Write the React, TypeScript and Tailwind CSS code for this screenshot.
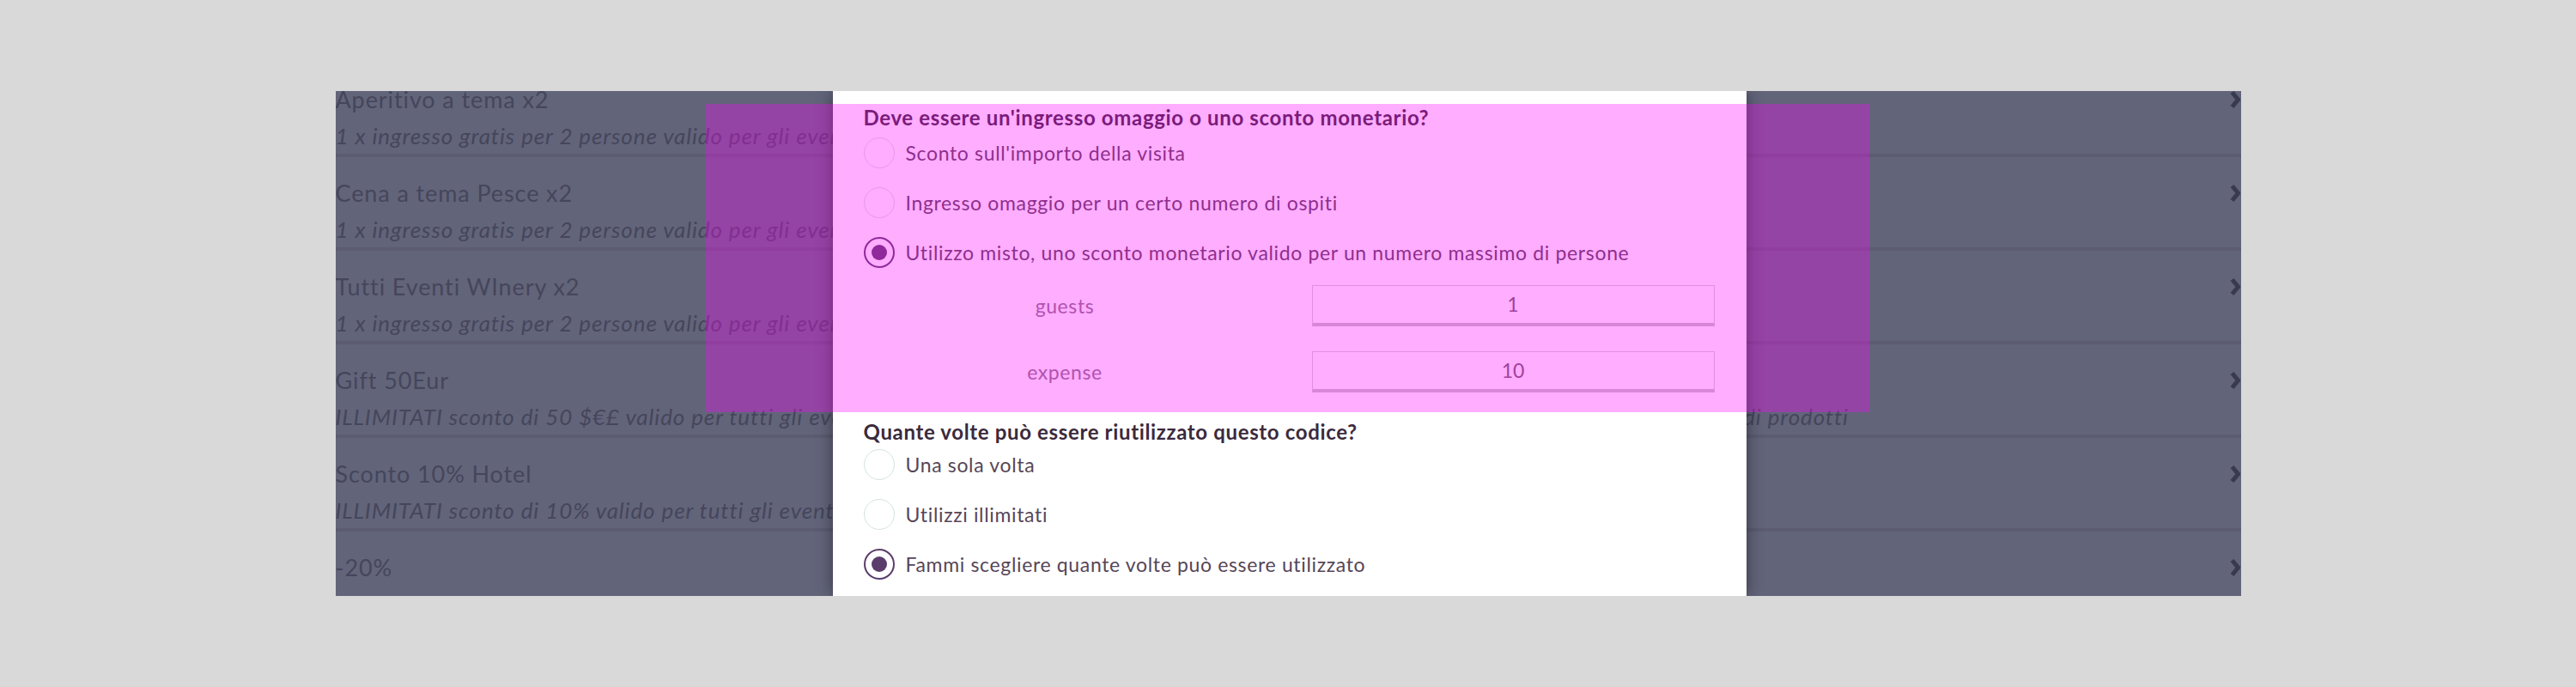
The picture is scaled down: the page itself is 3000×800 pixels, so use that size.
import React from 'react'

const rows = [
  { title: 'Aperitivo a tema x2', desc: '1 x ingresso gratis per 2 persone valido per gli eventi del mese' },
  { title: 'Cena a tema Pesce x2', desc: '1 x ingresso gratis per 2 persone valido per gli eventi del mese' },
  { title: 'Tutti Eventi WInery x2', desc: '1 x ingresso gratis per 2 persone valido per gli eventi del mese' },
  {
    title: 'Gift 50Eur',
    desc: 'ILLIMITATI sconto di 50 $€£ valido per tutti gli eventi, per tutte le esperienze nei vigneti, per le visite, le degustazioni, e per tutte le categorie di prodotti',
  },
  { title: 'Sconto 10% Hotel', desc: 'ILLIMITATI sconto di 10% valido per tutti gli eventi e camere' },
  { title: '-20%', desc: 'ILLIMITATI sconto di 20% valido per tutti gli eventi' },
]

function Chevron() {
  return (
    <svg width="12" height="22" viewBox="0 0 12 22" className="shrink-0">
      <path d="M2.5 2.5 L9.5 11 L2.5 19.5" fill="none" stroke="#393a4f" strokeWidth="5" strokeLinejoin="miter" />
    </svg>
  )
}

function Radio({ label, checked }: { label: string; checked?: boolean }) {
  return (
    <div className="flex items-center h-[36px] gap-[13px]">
      <span
        className={`w-[36px] h-[36px] rounded-full flex items-center justify-center shrink-0 ${
          checked ? 'border-2 border-[#5b3d6c]' : 'border-[1.5px] border-[#d6e2e2]'
        }`}
      >
        {checked && <span className="w-[18px] h-[18px] rounded-full bg-[#5b3d6c]" />}
      </span>
      <span className="text-[23px] tracking-[0.65px] text-[#574657]">{label}</span>
    </div>
  )
}

function NumberField({ label, value }: { label: string; value: string }) {
  return (
    <div className="grid grid-cols-2 gap-x-[53px] items-center">
      <div className="text-center text-[23px] tracking-[0.6px] text-[#8a7a8a]">{label}</div>
      <div className="h-[48px] border border-[#d3d3d3] border-b-[4px] border-b-[#c6c6c6] flex items-center justify-center text-[23px] text-[#6e616e]">
        {value}
      </div>
    </div>
  )
}

export default function App() {
  return (
    <div className="w-[3000px] h-[800px] bg-[#d9d9d9] pt-[106px]" style={{ fontFamily: 'Lato, "Noto Sans", sans-serif' }}>
      <div className="relative mx-auto w-[2219px] h-[588px] overflow-hidden bg-[#62647a]">
        {/* list behind the modal */}
        <div className="mt-[-32px]">
          {rows.map((r) => (
            <div key={r.title} className="h-[109px] border-b-4 border-[#5b5c71] flex items-start justify-between pr-[1px]">
              <div className="pt-[25px] min-w-0">
                <div className="text-[27px] leading-[34px] tracking-[0.9px] text-[#45465b]">{r.title}</div>
                <div className="text-[26px] leading-[32px] tracking-[0.9px] italic text-[#45465b] mt-[9px] whitespace-nowrap">{r.desc}</div>
              </div>
              <div className="mt-[31px]">
                <Chevron />
              </div>
            </div>
          ))}
        </div>

        {/* modal */}
        <div className="absolute inset-y-0 left-[579px] w-[1064px] bg-white shadow-[0_0_18px_rgba(0,0,0,0.45)] pl-[36px] pr-[37px] pt-[17px]">
          <div className="text-[24px] leading-[28px] tracking-[0.65px] font-bold text-[#3b2a3c]">
            Deve essere un'ingresso omaggio o uno sconto monetario?
          </div>
          <div className="mt-[9px] flex flex-col gap-[22px]">
            <Radio label="Sconto sull'importo della visita" />
            <Radio label="Ingresso omaggio per un certo numero di ospiti" />
            <Radio label="Utilizzo misto, uno sconto monetario valido per un numero massimo di persone" checked />
          </div>
          <div className="mt-[20px] flex flex-col gap-[29px]">
            <NumberField label="guests" value="1" />
            <NumberField label="expense" value="10" />
          </div>
          <div className="mt-[32px] text-[24px] leading-[28px] tracking-[0.65px] font-bold text-[#3b2a3c]">
            Quante volte può essere riutilizzato questo codice?
          </div>
          <div className="mt-[6px] flex flex-col gap-[22px]">
            <Radio label="Una sola volta" />
            <Radio label="Utilizzi illimitati" />
            <Radio label="Fammi scegliere quante volte può essere utilizzato" checked />
          </div>
        </div>

        {/* highlight overlay */}
        <div className="absolute left-[431px] top-[15px] w-[1355px] h-[359px] bg-[#ff00ff]/[0.32] pointer-events-none" />
      </div>
    </div>
  )
}
